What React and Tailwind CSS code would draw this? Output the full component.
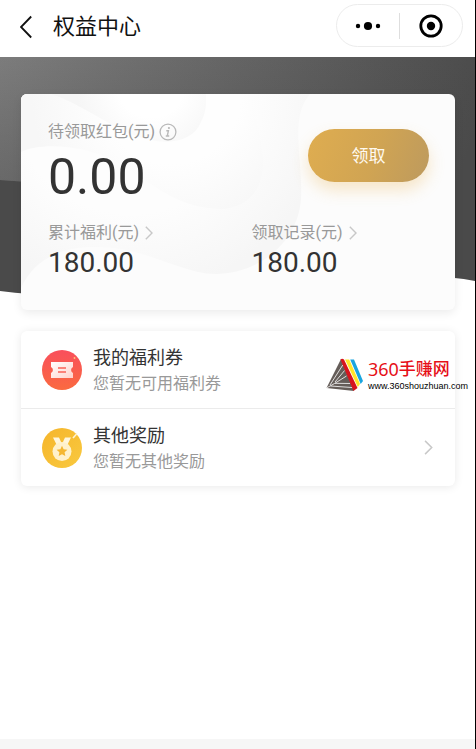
import React from 'react';

const TOTALS = [
  { key: 'benefit', label: '累计福利(元)', value: '180.00' },
  { key: 'record', label: '领取记录(元)', value: '180.00' }
];

const ENTRIES = [
  { key: 'coupon', title: '我的福利券', desc: '您暂无可用福利券', Icon: CouponIcon, arrow: false },
  { key: 'other', title: '其他奖励', desc: '您暂无其他奖励', Icon: MedalIcon, arrow: true }
];

export default function App() {
  return (
    <div className="min-h-screen flex flex-col bg-white border-r border-black text-[#333] font-[Roboto,'Noto_Sans_CJK_SC',sans-serif] overflow-x-hidden">
      <Header />
      <main className="relative flex-1 pl-[21px] pr-5 pt-[37px] pb-8">
        <Backdrop />
        <BalanceCard />
        <EntryList />
      </main>
      <div className="h-[10px] bg-[#f6f6f6]" />
    </div>
  );
}

function Header() {
  return (
    <header className="flex items-center h-[57px] pl-5 pr-3 pb-1 text-[#111]">
      <button type="button" aria-label="返回" className="shrink-0">
        <svg width="12" height="24" viewBox="0 0 12 24" fill="none" stroke="currentColor" strokeWidth="1.8">
          <path d="M11.2 1.5 1 12l10.2 10.5" />
        </svg>
      </button>
      <h1 className="ml-[21px] text-[22px] leading-8">权益中心</h1>
      <div className="ml-auto mt-[-2px] flex items-center w-[127px] h-[43px] rounded-full border border-[#ececec]">
        <button type="button" aria-label="更多" className="flex-1 flex justify-center">
          <svg width="26" height="10" viewBox="0 0 26 10" fill="#000">
            <circle cx="3" cy="5" r="2.2" />
            <circle cx="13" cy="5" r="4.1" />
            <circle cx="23" cy="5" r="2.2" />
          </svg>
        </button>
        <span className="w-px h-[26px] bg-[#dedede]" />
        <button type="button" aria-label="关闭" className="flex-1 flex justify-center">
          <svg width="24" height="24" viewBox="0 0 24 24">
            <circle cx="12" cy="12" r="10.2" fill="none" stroke="#000" strokeWidth="2.8" />
            <circle cx="12" cy="12" r="4.2" fill="#000" />
          </svg>
        </button>
      </div>
    </header>
  );
}

// Grey banner behind the balance card
function Backdrop() {
  return (
    <svg className="absolute inset-x-0 top-0 w-full h-[238px]" viewBox="0 0 475 238" preserveAspectRatio="none" aria-hidden="true">
      <defs>
        <linearGradient id="band" gradientUnits="userSpaceOnUse" x1="0" y1="0" x2="450" y2="150">
          <stop offset="0" stopColor="#7c7c7c" />
          <stop offset="1" stopColor="#4a4a4a" />
        </linearGradient>
        <linearGradient id="fade" x1="0" y1="0" x2="0" y2="1">
          <stop offset="0" stopColor="#4a4a4a" stopOpacity="0" />
          <stop offset="1" stopColor="#4a4a4a" stopOpacity="0.35" />
        </linearGradient>
      </defs>
      <path d="M0 0H475V224Q448 219 420 220L60 238Q30 238 0 234Z" fill="#4a4a4a" />
      <path d="M0 0H475V123C380 130 240 140 60 127Q28 125 0 123Z" fill="url(#band)" />
      <path d="M0 0H475V123C380 130 240 140 60 127Q28 125 0 123Z" fill="url(#fade)" />
    </svg>
  );
}

function BalanceCard() {
  return (
    <section className="relative h-[216px] pl-[27px] pt-7 rounded-md bg-[#fcfcfc] overflow-hidden shadow-[0_3px_10px_rgba(0,0,0,0.08)]">
      <CardWaves />
      <div className="relative flex justify-between pr-[26px]">
        <div>
          <div className="flex items-center gap-1 text-[16px] leading-5 text-[#999]">
            待领取红包(元)
            <InfoIcon />
          </div>
          <div className="mt-[7px] text-[50px] leading-[56px]">0.00</div>
        </div>
        <button type="button"
          className="mt-[7px] pt-[2px] w-[121px] h-[53px] rounded-full bg-linear-[110deg,#dfad50,#d0a453_55%,#bd9a5e] text-[17px] text-[#fffaf0] shadow-[0_8px_16px_rgba(235,180,80,0.3)]">
          领取
        </button>
      </div>
      <div className="relative mt-[18px] grid grid-cols-2">
        {TOTALS.map(t => (
          <a key={t.key} href={`#${t.key}`} className="block">
            <div className="flex items-center gap-[6px] text-[16px] leading-5 text-[#999]">
              {t.label}
              <Chevron />
            </div>
            <div className="mt-1 text-[28px] leading-8">{t.value}</div>
          </a>
        ))}
      </div>
    </section>
  );
}

// Layered paper waves, each with a soft inner edge
function CardWaves() {
  return (
    <svg className="absolute inset-0 w-full h-full" viewBox="0 0 434 216" preserveAspectRatio="none" aria-hidden="true">
      <defs>
        <radialGradient id="w1" gradientUnits="userSpaceOnUse" cx="110" cy="0" r="200">
          <stop offset="0.6" stopColor="#fdfdfd" />
          <stop offset="1" stopColor="#f6f6f6" />
        </radialGradient>
        <radialGradient id="w2" gradientUnits="userSpaceOnUse" cx="150" cy="0" r="140">
          <stop offset="0.5" stopColor="#fefefe" />
          <stop offset="1" stopColor="#f7f7f7" />
        </radialGradient>
        <radialGradient id="w3" gradientUnits="userSpaceOnUse" cx="130" cy="-10" r="75">
          <stop offset="0.45" stopColor="#fff" />
          <stop offset="1" stopColor="#f6f6f6" />
        </radialGradient>
      </defs>
      <path d="M0 0H289C268 24 282 65 280 105C276 158 222 188 177 178C135 167 115 152 70 153C35 154 12 168 0 194Z" fill="url(#w1)" />
      <path d="M0 58C20 48 70 50 105 74C140 96 160 114 200 115C228 114 243 94 242 65C240 38 233 18 229 0H0Z" fill="url(#w2)" />
      <path d="M30 0C60 10 82 28 110 40C145 54 172 48 180 28C186 16 185 8 185 0Z" fill="url(#w3)" />
    </svg>
  );
}

function EntryList() {
  return (
    <section className="relative mt-[21px] rounded-md bg-white shadow-[0_1px_10px_rgba(0,0,0,0.09)]">
      <ul className="divide-y divide-[#ebebeb]">
        {ENTRIES.map(({ key, title, desc, Icon, arrow }) => (
          <li key={key}>
            <a href={`#${key}`} className="flex items-center h-[77px] pl-5 pr-[22px]">
              <Icon />
              <div className="ml-[10px] pt-[3px]">
                <div className="text-[18px] leading-[26px]">{title}</div>
                <div className="text-[16px] leading-[26px] text-[#999]">{desc}</div>
              </div>
              {arrow && <span className="ml-auto"><Chevron large /></span>}
            </a>
          </li>
        ))}
      </ul>
      <SiteMark />
    </section>
  );
}

function SiteMark() {
  return (
    <a href="#site" className="absolute top-[27px] -right-[13px] flex items-center gap-[5px] whitespace-nowrap">
      <svg width="37" height="34" viewBox="0 0 37 34" aria-hidden="true">
        <path d="M15 1 0.5 30 28 33Z" fill="#655d59" />
        <g fill="none" stroke="#fff" strokeWidth="0.8">
          <path d="M16.8 7 4 27M18.6 12.5 9 24" />
          <path d="M0.5 30 8.5 25.5 20.5 18M4.5 28 26 29.5M9 25.3 24 25.5" />
        </g>
        <path d="M14.5 1.5Q16 0 18 1.5L31.5 30 27.5 33Z" fill="#d7141d" />
        <path d="M19 1.5H23.2L34 26 31.8 29Z" fill="#ffe52a" />
        <path d="M24.2 1.5H28L37 23 34.7 26Z" fill="#19a5df" />
      </svg>
      <div>
        <div className="flex items-center leading-5 text-[#e60f18]">
          <span className="text-[18px] font-['Noto_Sans',sans-serif]">360</span>
          <span className="text-[17px] font-medium">手赚网</span>
        </div>
        <div className="mt-[2px] text-[9px] leading-[10px] text-black font-['Liberation_Sans',sans-serif]">www.360shouzhuan.com</div>
      </div>
    </a>
  );
}

function Chevron({ large }) {
  return (
    <svg width={large ? 9 : 8} height={large ? 15 : 14} viewBox="0 0 8 14" fill="none" stroke="#c8c8c8" strokeWidth="1.4" aria-hidden="true">
      <path d="M0.8 0.8 7 7 0.8 13.2" />
    </svg>
  );
}

function InfoIcon() {
  return (
    <svg width="18" height="18" viewBox="0 0 18 18" fill="none" stroke="#b9b9b9" aria-hidden="true">
      <circle cx="9" cy="9" r="7.9" strokeWidth="1.3" />
      <circle cx="9.9" cy="5" r="1.1" fill="#b9b9b9" stroke="none" />
      <path d="M7.3 7.8H9.4L8.3 12.9M6.8 13H10.2" strokeWidth="1.4" />
    </svg>
  );
}

function CouponIcon() {
  return (
    <svg className="shrink-0" width="42" height="42" viewBox="0 0 42 42" aria-hidden="true">
      <defs>
        <linearGradient id="red" x1="0" y1="0" x2="0" y2="1">
          <stop offset="0" stopColor="#f94f5c" />
          <stop offset="1" stopColor="#fa6a40" />
        </linearGradient>
        <linearGradient id="ticket" x1="0" y1="0" x2="1" y2="1">
          <stop offset="0" stopColor="#fff" />
          <stop offset="1" stopColor="#ffd2cb" />
        </linearGradient>
      </defs>
      <circle cx="21" cy="21" r="20" fill="url(#red)" />
      <path d="M10 13H32V18A3.3 3.3 0 0 0 32 24V29H10V24A3.3 3.3 0 0 0 10 18Z" fill="url(#ticket)" />
      <path d="M17 19H25M17 23H25" stroke="#fa6257" strokeWidth="1.5" />
      <circle cx="33.5" cy="9" r="0.9" fill="#ffc27a" />
    </svg>
  );
}

function MedalIcon() {
  return (
    <svg className="shrink-0" width="42" height="42" viewBox="0 0 42 42" aria-hidden="true">
      <defs>
        <linearGradient id="gold" x1="0" y1="0" x2="1" y2="1">
          <stop offset="0" stopColor="#f5b52b" />
          <stop offset="1" stopColor="#f9c93f" />
        </linearGradient>
      </defs>
      <circle cx="21" cy="21" r="20" fill="url(#gold)" />
      <path d="M12 10.5H18L20.5 16 15.5 17.5ZM30 10.5H24L21.5 16 26.5 17.5Z" fill="#fff6dc" />
      <circle cx="21" cy="24.5" r="9.5" fill="#fff1cb" />
      <path d="M21 18.7 22.6 22.2 26.4 22.7 23.6 25.3 24.3 29.1 21 27.2 17.7 29.1 18.4 25.3 15.6 22.7 19.4 22.2Z" fill="#f5b731" />
      <path d="M32 11 36 6.5" stroke="#fff3d4" strokeWidth="1.6" />
    </svg>
  );
}
